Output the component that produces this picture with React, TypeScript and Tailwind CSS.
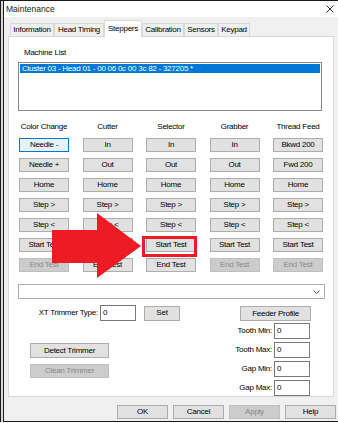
import React from "react";

const font = { fontFamily: '"Liberation Sans", Arial, sans-serif' };

function Btn({
  label,
  w = "w-[50px]",
  h = "h-[14px]",
  disabled = false,
  focus = false,
}: {
  label: string;
  w?: string;
  h?: string;
  disabled?: boolean;
  focus?: boolean;
}) {
  const base = "flex items-center justify-center border text-[8px] leading-none tracking-[-0.25px] shrink-0";
  const look = disabled
    ? "bg-[#cccccc] border-[#bfbfbf] text-[#8a8a8a]"
    : focus
    ? "bg-[#e5f1fb] border-[#0078d7] text-black"
    : "bg-[#e1e1e1] border-[#adadad] text-black";
  return <div className={`${base} ${look} ${w} ${h}`}>{label}</div>;
}

function Field({ value = "0" }: { value?: string }) {
  return (
    <div className="w-[36px] h-[16px] bg-white border border-[#7a7a7a] flex items-center pl-[2px] text-[8px] leading-none shrink-0">
      {value}
    </div>
  );
}

const columns: { title: string; buttons: { label: string; disabled?: boolean; focus?: boolean }[] }[] = [
  {
    title: "Color Change",
    buttons: [
      { label: "Needle -", focus: true },
      { label: "Needle +" },
      { label: "Home" },
      { label: "Step >" },
      { label: "Step <" },
      { label: "Start Test" },
      { label: "End Test", disabled: true },
    ],
  },
  {
    title: "Cutter",
    buttons: [
      { label: "In" },
      { label: "Out" },
      { label: "Home" },
      { label: "Step >" },
      { label: "Step <" },
      { label: "Start Test" },
      { label: "End Test" },
    ],
  },
  {
    title: "Selector",
    buttons: [
      { label: "In" },
      { label: "Out" },
      { label: "Home" },
      { label: "Step >" },
      { label: "Step <" },
      { label: "Start Test" },
      { label: "End Test" },
    ],
  },
  {
    title: "Grabber",
    buttons: [
      { label: "In" },
      { label: "Out" },
      { label: "Home" },
      { label: "Step >" },
      { label: "Step <" },
      { label: "Start Test" },
      { label: "End Test", disabled: true },
    ],
  },
  {
    title: "Thread Feed",
    buttons: [
      { label: "Bkwd 200" },
      { label: "Fwd 200" },
      { label: "Home" },
      { label: "Step >" },
      { label: "Step <" },
      { label: "Start Test" },
      { label: "End Test", disabled: true },
    ],
  },
];

const tabs = [
  { label: "Information", w: "w-[44px]" },
  { label: "Head Timing", w: "w-[50px]" },
  { label: "Steppers", w: "w-[38px]", active: true },
  { label: "Calibration", w: "w-[42px]" },
  { label: "Sensors", w: "w-[34px]" },
  { label: "Keypad", w: "w-[32px]" },
];

export default function App() {
  return (
    <div className="w-[338px] h-[423px] bg-white relative overflow-hidden text-black" style={font}>
      <div className="h-[1px] bg-[#1a1a1a]" />
      <div className="flex h-[421px]">
        <div className="flex w-[3px]">
          <div className="w-[1px] bg-[#1a1a1a]" />
          <div className="w-[2px] bg-[#d8d8d8]" />
        </div>
        <div className="flex-1 flex flex-col border-l border-b border-[#1a1a1a]">
          {/* Title bar */}
          <div className="h-[16px] bg-white flex items-center justify-between pl-[2px] pr-[4px]">
            <span className="text-[8.5px] leading-none text-[#222]">Maintenance</span>
            <svg width="8" height="8" viewBox="0 0 8 8">
              <path d="M0.5 0.5 L7.5 7.5 M7.5 0.5 L0.5 7.5" stroke="#333" strokeWidth="1" fill="none" />
            </svg>
          </div>
          {/* Body */}
          <div className="flex-1 bg-[#f0f0f0] flex flex-col pl-[4px]">
            {/* Tabs */}
            <div className="flex items-end h-[19px] pt-[3px] pl-[2px] relative z-10">
              {tabs.map((t) =>
                t.active ? (
                  <div
                    key={t.label}
                    className={`${t.w} h-[17px] -mb-[1px] bg-white border border-b-0 border-[#d9d9d9] flex items-center justify-center text-[8px] leading-none tracking-[-0.25px]`}
                  >
                    {t.label}
                  </div>
                ) : (
                  <div
                    key={t.label}
                    className={`${t.w} h-[13px] bg-[#f0f0f0] border border-b-0 border-[#d9d9d9] flex items-center justify-center text-[8px] leading-none tracking-[-0.25px]`}
                  >
                    {t.label}
                  </div>
                )
              )}
            </div>
            {/* Panel */}
            <div className="w-[326px] h-[361px] bg-white border border-[#d9d9d9] flex flex-col">
              <div className="mt-[11px] ml-[15px] h-[10px] leading-[10px] text-[8px] tracking-[-0.25px]">Machine List</div>
              <div className="mt-[4px] ml-[9px] w-[304px] h-[50px] border border-[#828790] bg-white p-[1px]">
                <div className="h-[9px] bg-[#0078d7] text-white text-[8px] leading-[9px] tracking-[-0.25px] pl-[2px] whitespace-nowrap">
                  Cluster 03 - Head 01 - 00 06 0c 00 3c 82 - 327205 *
                </div>
              </div>
              {/* Columns */}
              <div className="ml-[10px] mt-[11px] grid grid-cols-[50px_50px_50px_50px_50px] gap-x-[13.5px]">
                {columns.map((c) => (
                  <div key={c.title} className="flex flex-col items-center">
                    <div className="h-[10px] leading-[10px] text-[8px] tracking-[-0.25px] whitespace-nowrap">{c.title}</div>
                    <div className="mt-[6px] flex flex-col gap-[6px]">
                      {c.buttons.map((b, i) => (
                        <Btn key={i} label={b.label} disabled={b.disabled} focus={b.focus} />
                      ))}
                    </div>
                  </div>
                ))}
              </div>
              {/* Combo */}
              <div className="mt-[12px] ml-[9px] w-[307px] h-[15px] bg-white border border-[#acacac] flex items-center justify-end pr-[4px]">
                <svg width="7" height="4" viewBox="0 0 7 4">
                  <path d="M0.5 0.5 L3.5 3.5 L6.5 0.5" stroke="#555" strokeWidth="1" fill="none" />
                </svg>
              </div>
              {/* Lower section */}
              <div className="mt-[6px] flex justify-between">
                <div className="ml-[21px] flex flex-col">
                  <div className="flex items-center h-[16px]">
                    <span className="w-[68px] text-right text-[8px] leading-none tracking-[-0.25px] whitespace-nowrap">XT Trimmer Type:</span>
                    <div className="ml-[2px]">
                      <Field />
                    </div>
                    <div className="ml-[8px]">
                      <Btn label="Set" w="w-[36px]" h="h-[15px]" />
                    </div>
                  </div>
                  <div className="mt-[22px]">
                    <Btn label="Detect Trimmer" w="w-[79px]" h="h-[15px]" />
                  </div>
                  <div className="mt-[6px]">
                    <Btn label="Clean Trimmer" w="w-[79px]" h="h-[14px]" disabled />
                  </div>
                </div>
                <div className="mr-[23px] flex flex-col items-end">
                  <div className="mt-[1px] mr-[-1px]">
                    <Btn label="Feeder Profile" w="w-[71px]" h="h-[15px]" />
                  </div>
                  <div className="mt-[2px] flex flex-col gap-[3px]">
                    {["Tooth Min:", "Tooth Max:", "Gap Min:", "Gap Max:"].map((l) => (
                      <div key={l} className="flex items-center justify-end h-[16px]">
                        <span className="text-[8px] leading-none tracking-[-0.25px] mr-[2px] whitespace-nowrap">{l}</span>
                        <Field />
                      </div>
                    ))}
                  </div>
                </div>
              </div>
            </div>
            {/* Bottom buttons */}
            <div className="mt-[8px] flex justify-end gap-[5px] pr-[2px]">
              <Btn label="OK" w="w-[51px]" />
              <Btn label="Cancel" w="w-[51px]" />
              <Btn label="Apply" w="w-[51px]" disabled />
              <Btn label="Help" w="w-[51px]" />
            </div>
          </div>
        </div>
      </div>

      {/* Annotation overlays */}
      <div className="absolute left-[142px] top-[236px] w-[55px] h-[21px] border-[3px] border-[#ed1c24]" />
      <svg className="absolute left-[52px] top-[213px]" width="90" height="66" viewBox="0 0 90 66">
        <polygon points="0,17 45,17 45,0 89,33 45,65 45,50 0,50" fill="#ed1c24" />
      </svg>
    </div>
  );
}
